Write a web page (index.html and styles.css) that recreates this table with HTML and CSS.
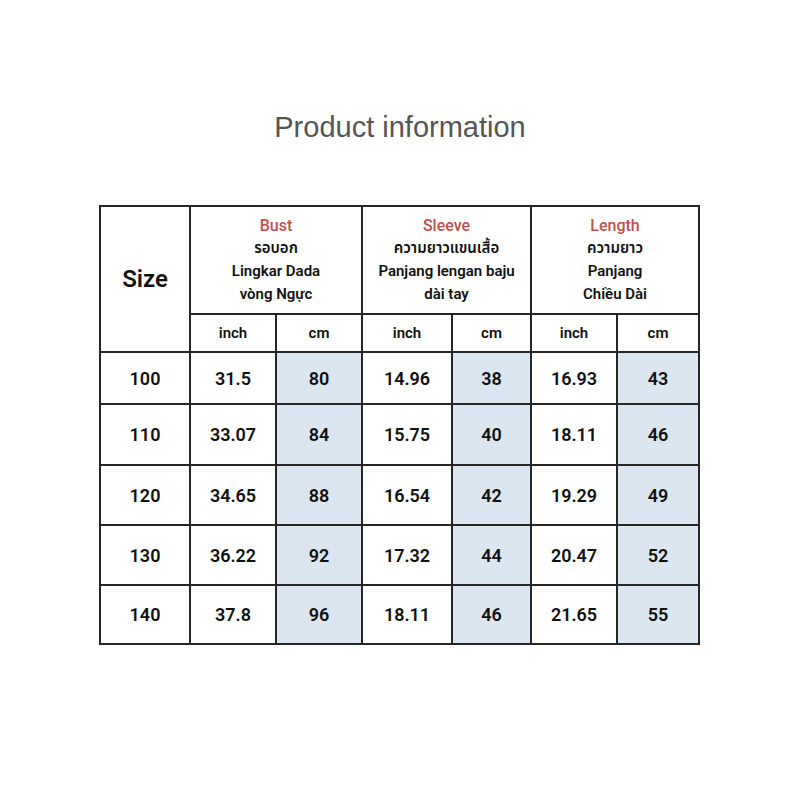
FILE: index.html
```html
<!DOCTYPE html>
<html>
<head>
<meta charset="utf-8">
<link rel="stylesheet" href="styles.css">
</head>
<body>
<h1 class="title">Product information</h1>
<table class="sizes">
  <colgroup>
    <col class="c-size">
    <col class="c-bi">
    <col class="c-bc">
    <col class="c-si">
    <col class="c-sc">
    <col class="c-li">
    <col class="c-lc">
  </colgroup>
  <thead>
    <tr class="head1">
      <th rowspan="2" class="size">Size</th>
      <th colspan="2"><span class="en">Bust</span><span>รอบอก</span><span>Lingkar Dada</span><span>vòng Ngực</span></th>
      <th colspan="2"><span class="en">Sleeve</span><span>ความยาวแขนเสื้อ</span><span>Panjang lengan baju</span><span>dài tay</span></th>
      <th colspan="2"><span class="en">Length</span><span>ความยาว</span><span>Panjang</span><span>Chiều Dài</span></th>
    </tr>
    <tr class="head2">
      <th>inch</th><th>cm</th><th>inch</th><th>cm</th><th>inch</th><th>cm</th>
    </tr>
  </thead>
  <tbody>
    <tr class="r1"><td>100</td><td>31.5</td><td class="cm">80</td><td>14.96</td><td class="cm">38</td><td>16.93</td><td class="cm">43</td></tr>
    <tr class="r2"><td>110</td><td>33.07</td><td class="cm">84</td><td>15.75</td><td class="cm">40</td><td>18.11</td><td class="cm">46</td></tr>
    <tr class="r3"><td>120</td><td>34.65</td><td class="cm">88</td><td>16.54</td><td class="cm">42</td><td>19.29</td><td class="cm">49</td></tr>
    <tr class="r4"><td>130</td><td>36.22</td><td class="cm">92</td><td>17.32</td><td class="cm">44</td><td>20.47</td><td class="cm">52</td></tr>
    <tr class="r5"><td>140</td><td>37.8</td><td class="cm">96</td><td>18.11</td><td class="cm">46</td><td>21.65</td><td class="cm">55</td></tr>
  </tbody>
</table>
</body>
</html>
```
FILE: styles.css
```css
html, body {
  margin: 0;
  padding: 0;
  background: #ffffff;
}
body {
  width: 800px;
  height: 800px;
}
.title {
  margin: 111px 0 0 0;
  font-family: "Liberation Sans", Arial, sans-serif;
  font-weight: normal;
  font-size: 29px;
  line-height: 32px;
  color: #555555;
  text-align: center;
}
.sizes {
  margin: 62px 0 0 99px;
  width: 599px;
  border-collapse: collapse;
  table-layout: fixed;
  font-family: Roboto, "Noto Sans", "Noto Sans Thai", "Loma", "Garuda", sans-serif;
  font-weight: 500;
  color: #111111;
}
.c-size { width: 90px; }
.c-bi { width: 86px; }
.c-bc { width: 86px; }
.c-si { width: 90px; }
.c-sc { width: 79px; }
.c-li { width: 86px; }
.c-lc { width: 82px; }
.sizes th, .sizes td {
  border: 2px solid #262626;
  padding: 0;
  text-align: center;
  vertical-align: middle;
}
.head1 { height: 108px; }
.head1 th {
  font-size: 15px;
  font-weight: 600;
  line-height: 23px;
}
.head1 th span {
  display: block;
}
.head1 th .en {
  color: #c0504d;
  font-size: 16px;
  font-weight: 500;
}
.head1 th.size {
  font-size: 24px;
  font-weight: 600;
}
.head2 { height: 38px; }
.head2 th {
  font-size: 15px;
  font-weight: 600;
}
.sizes td {
  font-size: 18px;
  font-weight: 600;
}
.sizes td.cm {
  background: #dce6f1;
}
.r1 { height: 52px; }
.r2 { height: 61px; }
.r3 { height: 60px; }
.r4 { height: 60px; }
.r5 { height: 59px; }
```
